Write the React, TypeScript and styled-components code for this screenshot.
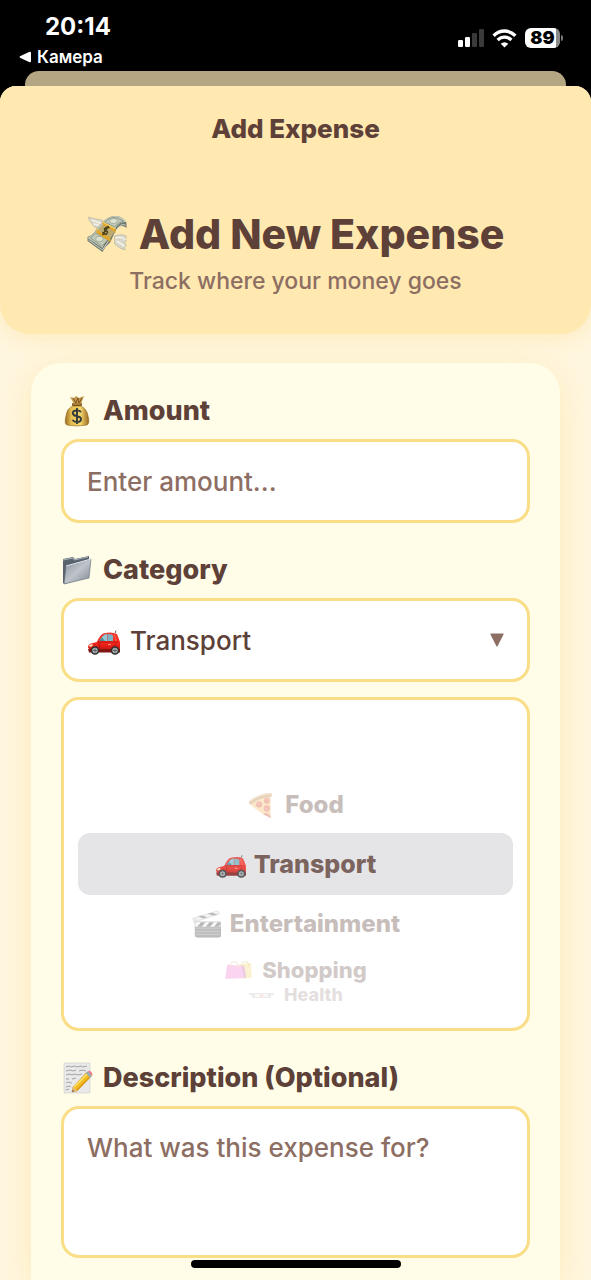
import React, { useState } from "react";
import styled, { createGlobalStyle } from "styled-components";

const GlobalStyle = createGlobalStyle`
  *, *::before, *::after { box-sizing: border-box; }
  body {
    margin: 0;
    background: #000;
    font-family: Inter, "Liberation Sans", sans-serif;
    color: #5d4037;
  }
  button, input, select, textarea { font: inherit; color: inherit; }
`;

const Screen = styled.div`
  min-height: 100vh;
  display: flex;
  flex-direction: column;
`;

const StatusBar = styled.header`
  display: flex;
  justify-content: space-between;
  padding: 12px 28px 4px 19px;
  height: 71px;
  color: #fff;
`;

const StatusLeft = styled.div`
  display: flex;
  flex-direction: column;
`;

const Clock = styled.time`
  padding-left: 26px;
  font-size: 24px;
  line-height: 30px;
  font-weight: 700;
`;

const BackLink = styled.a`
  display: flex;
  align-items: center;
  gap: 6px;
  color: #fff;
  text-decoration: none;
  font-size: 17px;
  line-height: 30px;
  font-weight: 600;
`;

const StatusIcons = styled.div`
  display: flex;
  align-items: center;
  gap: 8px;
  height: 52px;
`;

const SheetBehind = styled.div`
  height: 15px;
  margin: 0 25px;
  border-radius: 14px 14px 0 0;
  background: #b5a683;
`;

const Sheet = styled.main`
  flex: 1;
  display: flex;
  flex-direction: column;
  border-radius: 16px 16px 0 0;
  background: #fff6df;
  overflow: hidden;
`;

const Hero = styled.section`
  display: flex;
  flex-direction: column;
  align-items: center;
  padding: 26px 20px 36px;
  border-radius: 0 0 30px 30px;
  background: #ffe9b1;
  box-shadow: 0 4px 20px rgba(250, 220, 140, 0.4);
`;

const NavTitle = styled.h2`
  margin: 0;
  font-size: 26px;
  line-height: 34px;
  font-weight: 800;
`;

const Heading = styled.h1`
  display: flex;
  align-items: center;
  gap: 11px;
  margin: 62px 0 0;
  font-size: 41px;
  line-height: 52px;
  font-weight: 800;
  white-space: nowrap;
`;

const Subtitle = styled.p`
  margin: 4px 0 0;
  color: #8d6e63;
  font-size: 23px;
  line-height: 34px;
  font-weight: 500;
`;

const Form = styled.form`
  flex: 1;
  display: flex;
  flex-direction: column;
  gap: 29px;
  margin: 29px 31px 0;
  padding: 30px 30px 22px;
  border-radius: 30px 30px 0 0;
  background: #fffde7;
  box-shadow: 0 6px 30px rgba(250, 220, 130, 0.4);
`;

const Field = styled.div`
  display: flex;
  flex-direction: column;
`;

const Label = styled.label`
  display: flex;
  align-items: center;
  gap: 10px;
  margin-bottom: 10px;
  font-size: 27px;
  line-height: 36px;
  font-weight: 800;
`;

const frame = `
  width: 100%;
  border: 3px solid #fadd87;
  border-radius: 18px;
  background: #fff;
`;

const TextInput = styled.input`
  ${frame}
  height: 84px;
  padding: 0 23px;
  font-size: 26px;
  font-weight: 500;
  outline: none;
  &::placeholder { color: #8d6e63; opacity: 1; }
`;

const TextArea = styled.textarea`
  ${frame}
  display: block;
  height: 152px;
  padding: 22px 23px;
  font-size: 26px;
  line-height: 34px;
  font-weight: 500;
  resize: none;
  outline: none;
  &::placeholder { color: #8d6e63; opacity: 1; }
`;

const SelectFrame = styled.div`
  ${frame}
  display: flex;
  align-items: center;
  gap: 9px;
  height: 84px;
  padding: 0 23px;
`;

const Select = styled.select`
  flex: 1;
  min-width: 0;
  height: 100%;
  padding: 0;
  border: 0;
  background: none;
  appearance: none;
  outline: none;
  font-size: 26px;
  font-weight: 500;
`;

const Wheel = styled.div`
  ${frame}
  display: flex;
  flex-direction: column;
  margin-top: 15px;
  padding: 77px 14px 22px;
  height: 334px;
`;

const WheelOption = styled.button<{ $height: number; $size: number }>`
  display: flex;
  flex: none;
  align-items: center;
  justify-content: center;
  width: 100%;
  height: ${(p) => p.$height}px;
  padding: 0;
  border: 0;
  border-radius: 12px;
  background: none;
  font-size: ${(p) => p.$size}px;
  line-height: 1;
  font-weight: 800;

  &[aria-selected="true"] { background: #e5e5e8; }
`;

const OptionContent = styled.span<{ $opacity: number; $gap: number }>`
  display: flex;
  align-items: center;
  gap: ${(p) => p.$gap}px;
  opacity: ${(p) => p.$opacity};
`;

const HomeIndicator = styled.div`
  position: fixed;
  bottom: 12px;
  left: 50%;
  width: 210px;
  height: 8px;
  margin-left: -105px;
  border-radius: 4px;
  background: #000;
`;

type IconProps = { width: number; height: number };

const SignalIcon = () => (
  <svg width="26" height="18" viewBox="0 0 26 18" aria-hidden="true">
    <rect x="0" y="11" width="5" height="7" rx="1.3" fill="#fff" />
    <rect x="7" y="8" width="5" height="10" rx="1.3" fill="#fff" />
    <rect x="14" y="4" width="5" height="14" rx="1.3" fill="#3a3a3a" />
    <rect x="21" y="0" width="5" height="18" rx="1.3" fill="#3a3a3a" />
  </svg>
);

const WifiIcon = () => (
  <svg width="25" height="19" viewBox="0 0 25 19" aria-hidden="true" fill="none" stroke="#fff">
    <path d="M1.6 6.7Q6.4 2 12.5 2T23.4 6.7" strokeWidth="3.4" />
    <path d="M5.6 11Q8.7 8.1 12.5 8.1T19.4 11" strokeWidth="3.3" />
    <path d="M12.5 18.6L8.7 14.7Q12.5 11.7 16.3 14.7Z" fill="#fff" stroke="none" />
  </svg>
);

const Battery = styled.span`
  display: flex;
  align-items: center;
  gap: 1px;
`;

const BatteryBody = styled.span`
  width: 35px;
  height: 20px;
  border-radius: 6px;
  background: linear-gradient(90deg, #fff 89%, #8b8b8b 89%);
  color: #000;
  font-size: 18px;
  line-height: 20px;
  font-weight: 900;
  text-align: center;
`;

const BatteryTip = styled.span`
  width: 2px;
  height: 6px;
  border-radius: 0 2px 2px 0;
  background: #777;
`;

const MoneyWings = ({ width, height }: IconProps) => (
  <svg width={width} height={height} viewBox="0 0 40 38" aria-hidden="true">
    <g fill="#d8d5c9" stroke="#aaa898" strokeWidth=".5">
      <path d="M1 2Q7 4 15 5L17 12Q15 16 10 15Q10 13 7 12Q5 10 4 8Q1 6 1 2Z" />
      <path d="M27 21Q34 18 39 21Q37 24 39 26Q36 27 39 31Q35 31 38 35Q32 34 27 29Z" />
    </g>
    <path d="M4 5L15 9M6 9L14 11M28 23Q34 21 38 25M29 26L37 31" stroke="#f5f2e6" strokeWidth="1.5" fill="none" />
    <path d="M15 7Q22 0 29 1Q36 2 39 8V13Q33 8 28 16Q25 22 23 27Q18 31 15 37L0 26V22Q6 20 9 14Z" fill="#717a70" />
    <path d="M15 7Q22 0 29 1Q36 2 39 7Q32 6 28 13L23 22Q18 25 15 33L0 23Q7 19 10 13Z" fill="#c2c9b9" />
    <path d="M17 7Q24 1 30 3L36 6Q31 7 27 12ZM8 18L21 25L14 31L3 23Z" fill="none" stroke="#81917f" strokeWidth=".8" />
    <ellipse cx="26" cy="6" rx="4" ry="2.6" fill="#dce0cf" stroke="#8e9c8b" strokeWidth=".7" />
    <ellipse cx="12" cy="24" rx="4" ry="2.7" fill="#dce0cf" stroke="#8e9c8b" strokeWidth=".7" />
    <path d="M1 25L15 35L21 26M29 15Q33 8 38 10" stroke="#e2e5da" strokeWidth=".8" fill="none" />
    <path d="M15 7L28 14V18L15 10ZM9 14L23 22V27L9 18Z" fill="#e0a62b" />
    <path d="M15 7L28 14M9 14L23 22" stroke="#f7ce5c" strokeWidth="1.1" />
    <path d="M15 10L27 17L23 23L10 15Z" fill="#bcaa71" />
    <path d="M22 13Q19 11 17 14Q17 16 19 16Q21 17 19 19Q17 20 15 17M21 11L15 20" fill="none" stroke="#4c401a" strokeWidth="1.4" />
  </svg>
);

const MoneyBag = ({ width, height }: IconProps) => (
  <svg width={width} height={height} viewBox="0 0 30 32" aria-hidden="true">
    <defs>
      <linearGradient id="bag" x1="0" x2="1">
        <stop stopColor="#9a6921" /><stop offset=".25" stopColor="#e3be50" />
        <stop offset=".65" stopColor="#f4d76c" /><stop offset="1" stopColor="#9b6720" />
      </linearGradient>
    </defs>
    <path d="M8 2L12 3L14 1L17 3L22 1Q20 6 19 9H12Q10 5 8 2Z" fill="#c2984a" />
    <path d="M11 3L14 8L16 3L17 8L20 3" stroke="#7e5625" fill="none" />
    <path d="M11 11Q5 13 4 21Q2 29 5 30Q15 32 25 30Q28 28 26 21Q25 14 19 11Z" fill="url(#bag)" stroke="#8d641f" strokeWidth=".6" />
    <rect x="10" y="8" width="10" height="3" rx="1.2" fill="#79511c" />
    <path d="M11 9H19" stroke="#d7ac53" />
    <path d="M19 17Q17 15 14 15.5Q10 16 11 19Q12 21 15 21Q19 22 19 24Q19 27 15 27Q12 27 10.500 25M15 13V29" fill="none" stroke="#333b3a" strokeWidth="1.9" />
  </svg>
);

const Folder = ({ width, height }: IconProps) => (
  <svg width={width} height={height} viewBox="0 0 30 32" aria-hidden="true">
    <defs>
      <linearGradient id="folder" x2="1" y2="1">
        <stop stopColor="#868f9a" /><stop offset=".5" stopColor="#bfc4ca" /><stop offset="1" stopColor="#7c8590" />
      </linearGradient>
    </defs>
    <path d="M1 5L11 3Q12 4 13 5L27 2V22L3 30L1 29Z" fill="#59636e" />
    <path d="M1 6L11 4L12 6L26 3" fill="none" stroke="#aab4bd" />
    <path d="M4 12L29 5L27 24L2 30Z" fill="url(#folder)" stroke="#606c78" strokeWidth=".6" />
    <path d="M4 12L29 5" stroke="#e4e8ed" strokeWidth="1" />
  </svg>
);

const Car = ({ width, height }: IconProps) => (
  <svg width={width} height={height} viewBox="0 0 34 30" aria-hidden="true">
    <defs>
      <linearGradient id="car-body" y2="1" x2="0">
        <stop stopColor="#e63d36" /><stop offset=".45" stopColor="#ff2b20" /><stop offset="1" stopColor="#bd110e" />
      </linearGradient>
    </defs>
    <g transform="translate(0 3.8) scale(1 .88)">
      <path d="M28 5L29 2" stroke="#555" />
      <path d="M3 25L1 21Q1 17 6 16L10 15Q13 6 17 5Q25 3 30 6L33 15V23L32 26H3Z" fill="url(#car-body)" />
      <path d="M12 14L16 8Q18 6 20 6V14Z" fill="#8fc8d4" />
      <path d="M20.500 6Q25 6 26 8V14H20.500Z" fill="#7ab5c5" />
      <path d="M12 14L15 10L18 14Z" fill="#4d8b9a" />
      <path d="M27 7Q29 10 29 14" stroke="#ff6a5c" fill="none" />
      <path d="M10 15H31M12 16L13 24H25Q27 19 29 17" fill="none" stroke="#a3100e" strokeWidth=".8" />
      <path d="M2 19L5 17L6 19L3 21Z" fill="#f9dfb5" />
      <path d="M12 14Q14 12 15 16L12 17Z" fill="#cf201a" />
      <path d="M1 23H33V27H2Z" fill="#831513" />
      <path d="M21 18H24" stroke="#ffa093" />
    </g>
    {[8, 28].map((cx) => (
      <g key={cx}>
        <circle cx={cx} cy="25.500" r="4.300" fill="#30302f" />
        <circle cx={cx} cy="25.500" r="2.700" fill="#aeb5b9" />
        <path d={`M${cx} 23.500V27.500M${cx - 2} 25.500H${cx + 2}`} stroke="#5b6265" strokeWidth="1" />
      </g>
    ))}
  </svg>
);

const Pizza = ({ width, height }: IconProps) => (
  <svg width={width} height={height} viewBox="0 0 28 28" aria-hidden="true">
    <path d="M2 11L24 4V27Q10 20 2 12Z" fill="#f4bb64" />
    <path d="M1 11Q12 1 25 1L25 5Q12 6 3 13Z" fill="#b97a35" />
    <path d="M2 10Q12 2 25 2" stroke="#dfac6b" strokeWidth="1.500" fill="none" />
    <g fill="#d84a2a"><circle cx="12" cy="13" r="3.200" /><circle cx="20" cy="9" r="3" /><circle cx="20" cy="17" r="3.200" /><path d="M16 23Q20 20 24 25V27Z" /></g>
    <path d="M10 12H13M19 8H21M18 17L21 18" stroke="#ef8250" />
  </svg>
);

const Clapper = ({ width, height }: IconProps) => (
  <svg width={width} height={height} viewBox="0 0 32 30" aria-hidden="true">
    <path d="M1 9L28 1L30 4L3 13Z" fill="#ddd" stroke="#999" strokeWidth=".7" />
    <path d="M7 7L13 9L17 8L11 6ZM17 4L23 6L28 5L22 3Z" fill="#343434" />
    <circle cx="4" cy="12" r="2.500" fill="#bbb" />
    <path d="M4 13H31V28Q31 29 29 29H6Q4 29 4 27Z" fill="#444" stroke="#333" />
    <path d="M4 13H31V18H4Z" fill="#eee" />
    <path d="M10 13H15L11 18H6ZM19 13H24L20 18H15ZM28 13H31V15L29 18H24Z" fill="#333" />
    <path d="M5 19.500H30M5 23H30M5 26H30" stroke="#888" strokeWidth=".8" />
  </svg>
);

const Bags = ({ width, height }: IconProps) => (
  <svg width={width} height={height} viewBox="0 0 30 20" aria-hidden="true">
    <path d="M14 4L28 2L29 17L19 19Z" fill="#f0cd4d" />
    <path d="M18 7Q18 0 22 1Q26 0 26 6" fill="none" stroke="#d79d35" />
    <path d="M22 8H28M22 12H28" stroke="#f7df84" />
    <path d="M3 4L19 5L21 18L1 19Z" fill="#ed65cb" />
    <path d="M18 5L21 18L23 17L21 5Z" fill="#ba4499" />
    <path d="M6 8Q6 0 10 1Q15 0 15 8" fill="none" stroke="#e09b65" />
  </svg>
);

const Hospital = ({ width, height }: IconProps) => (
  <svg width={width} height={height} viewBox="0 0 27 7" aria-hidden="true">
    <path d="M1 1H26V3H23V6H4V3H1Z" fill="#8b8b8b" />
    <path d="M7 2H20V5H7Z" fill="#f5d9d9" />
    <path d="M11 3.500H16M13.500 2V5" stroke="#ec4646" />
  </svg>
);

const Memo = ({ width, height }: IconProps) => (
  <svg width={width} height={height} viewBox="0 0 30 32" aria-hidden="true">
    <path d="M2 1H28V31H2Z" fill="#e9e9e9" stroke="#cecece" strokeWidth=".6" />
    <path d="M4 5L7 4L9 5L13 4L15 5L19 4L21 5L25 4M4 9L8 8L11 9L14 8M17 9L20 8L24 9M4 13L7 12L10 13L13 12L16 13L20 12M4 17H7M10 17L14 16M4 21L6 20L10 21M4 25L7 24L9 25M4 28L7 27" fill="none" stroke="#858585" strokeWidth=".7" />
    <path d="M10 30L11 25L25 10L29 14L15 29Z" fill="#f4bd22" stroke="#bb7c16" strokeWidth=".5" />
    <path d="M12 25L25 12" stroke="#ffe375" strokeWidth="1.500" />
    <path d="M15 28L28 15" stroke="#dc9413" strokeWidth="1.200" />
    <path d="M24 11L26 9L30 14L28 16Z" fill="#9baab1" />
    <path d="M26 9Q28 8 30 11Q31 13 30 14Z" fill="#ed7485" />
    <path d="M10 30L11 25L15 29Z" fill="#e4bd83" />
    <path d="M10 30L11 28L12 29Z" fill="#343434" />
  </svg>
);

const CATEGORIES = [
  { name: "Food", Icon: Pizza, width: 28, iconHeight: 27, height: 56, size: 24, opacity: 0.34, gap: 10 },
  { name: "Transport", Icon: Car, width: 32, iconHeight: 28, height: 62, size: 25, opacity: 0.78, gap: 7 },
  { name: "Entertainment", Icon: Clapper, width: 31, iconHeight: 28, height: 58, size: 24, opacity: 0.34, gap: 8 },
  { name: "Shopping", Icon: Bags, width: 29, iconHeight: 19, height: 34, size: 22, opacity: 0.27, gap: 9 },
  { name: "Health", Icon: Hospital, width: 27, iconHeight: 7, height: 16, size: 18, opacity: 0.16, gap: 9 },
];

export default function App() {
  const [category, setCategory] = useState("Transport");
  const CurrentIcon = (CATEGORIES.find((c) => c.name === category) ?? CATEGORIES[1]).Icon;

  return (
    <>
      <GlobalStyle />
      <Screen>
        <StatusBar>
          <StatusLeft>
            <Clock>20:14</Clock>
            <BackLink href="#">
              <svg width="12" height="12" viewBox="0 0 12 12" aria-hidden="true">
                <path d="M1 5.200L10.500 .800Q12 .500 12 2V10Q12 11.500 10.500 11.200L1 6.800Q0 6 1 5.200Z" fill="#fff" />
              </svg>
              Камера
            </BackLink>
          </StatusLeft>
          <StatusIcons>
            <SignalIcon />
            <WifiIcon />
            <Battery>
              <BatteryBody>89</BatteryBody>
              <BatteryTip />
            </Battery>
          </StatusIcons>
        </StatusBar>
        <SheetBehind />
        <Sheet>
          <Hero>
            <NavTitle>Add Expense</NavTitle>
            <Heading>
              <MoneyWings width={41} height={38} />
              Add New Expense
            </Heading>
            <Subtitle>Track where your money goes</Subtitle>
          </Hero>
          <Form onSubmit={(e) => e.preventDefault()}>
            <Field>
              <Label htmlFor="amount">
                <MoneyBag width={32} height={32} />
                Amount
              </Label>
              <TextInput id="amount" inputMode="decimal" placeholder="Enter amount..." />
            </Field>
            <Field>
              <Label htmlFor="category">
                <Folder width={32} height={32} />
                Category
              </Label>
              <SelectFrame>
                <CurrentIcon width={34} height={30} />
                <Select id="category" value={category} onChange={(e) => setCategory(e.target.value)}>
                  {CATEGORIES.map((c) => (
                    <option key={c.name}>{c.name}</option>
                  ))}
                </Select>
                <svg width="14" height="14" viewBox="0 0 14 14" aria-hidden="true">
                  <path d="M1 .500H13Q14 .500 13.500 1.500L7.700 13Q7 14 6.300 13L.500 1.500Q0 .500 1 .500Z" fill="#8d6e63" />
                </svg>
              </SelectFrame>
              <Wheel role="listbox" aria-label="Category">
                {CATEGORIES.map(({ name, Icon, width, iconHeight, height, size, opacity, gap }) => (
                  <WheelOption
                    key={name}
                    type="button"
                    role="option"
                    aria-selected={name === category}
                    onClick={() => setCategory(name)}
                    $height={height}
                    $size={size}
                  >
                    <OptionContent $opacity={opacity} $gap={gap}>
                      <Icon width={width} height={iconHeight} />
                      {name}
                    </OptionContent>
                  </WheelOption>
                ))}
              </Wheel>
            </Field>
            <Field>
              <Label htmlFor="description">
                <Memo width={32} height={32} />
                Description (Optional)
              </Label>
              <TextArea id="description" placeholder="What was this expense for?" />
            </Field>
          </Form>
        </Sheet>
      </Screen>
      <HomeIndicator />
    </>
  );
}
